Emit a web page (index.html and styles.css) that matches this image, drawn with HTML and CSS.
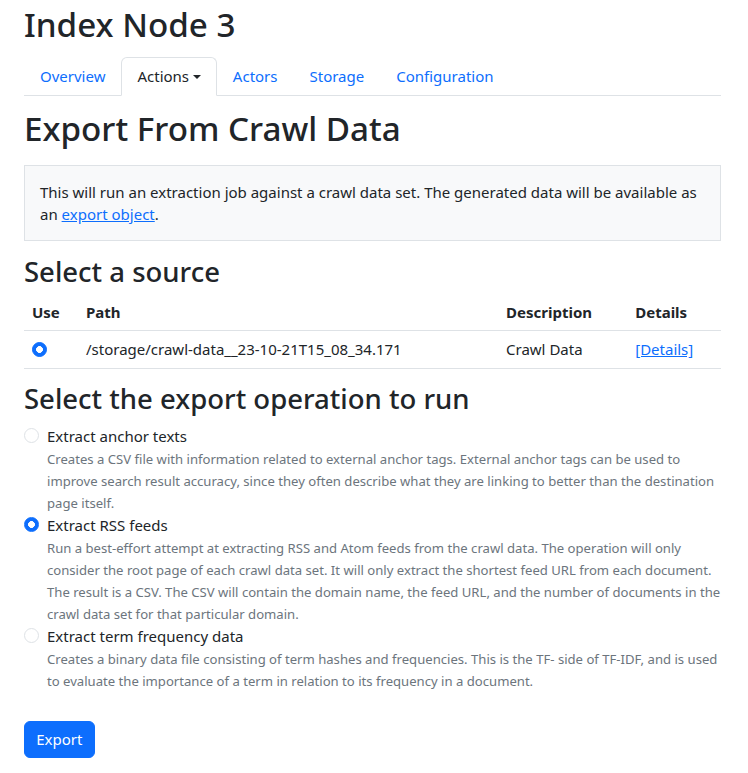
FILE: index.html
```html
<!DOCTYPE html>
<html lang="en">
<head>
<meta charset="utf-8">
<title>Index Node 3</title>
<link rel="stylesheet" href="styles.css">
</head>
<body>
<div class="page">
  <h1 class="node-title">Index Node 3</h1>
  <nav class="tabs">
    <a class="tab" href="#">Overview</a>
    <a class="tab active" href="#">Actions<span class="caret"></span></a>
    <a class="tab" href="#">Actors</a>
    <a class="tab" href="#">Storage</a>
    <a class="tab" href="#">Configuration</a>
  </nav>
  <h1 class="page-title">Export From Crawl Data</h1>
  <div class="note">This will run an extraction job against a crawl data set. The generated data will be available as an <a href="#">export object</a>.</div>
  <h2 class="section-title">Select a source</h2>
  <table class="sources">
    <thead>
      <tr><th class="col-use">Use</th><th>Path</th><th>Description</th><th>Details</th></tr>
    </thead>
    <tbody>
      <tr>
        <td class="col-use"><input class="radio radio-cell" type="radio" name="source" checked></td>
        <td>/storage/crawl-data__23-10-21T15_08_34.171</td>
        <td>Crawl Data</td>
        <td><a href="#">[Details]</a></td>
      </tr>
    </tbody>
  </table>
  <h2 class="section-title">Select the export operation to run</h2>
  <div class="options">
    <div class="option">
      <input class="radio" type="radio" name="op" id="op1">
      <div class="option-body">
        <label for="op1" class="option-label">Extract anchor texts</label>
        <div class="option-desc">Creates a CSV file with information related to external anchor tags. External anchor tags can be used to improve search result accuracy, since they often describe what they are linking to better than the destination page itself.</div>
      </div>
    </div>
    <div class="option">
      <input class="radio" type="radio" name="op" id="op2" checked>
      <div class="option-body">
        <label for="op2" class="option-label">Extract RSS feeds</label>
        <div class="option-desc">Run a best-effort attempt at extracting RSS and Atom feeds from the crawl data. The operation will only consider the root page of each crawl data set. It will only extract the shortest feed URL from each document. The result is a CSV. The CSV will contain the domain name, the feed URL, and the number of documents in the crawl data set for that particular domain.</div>
      </div>
    </div>
    <div class="option">
      <input class="radio" type="radio" name="op" id="op3">
      <div class="option-body">
        <label for="op3" class="option-label">Extract term frequency data</label>
        <div class="option-desc">Creates a binary data file consisting of term hashes and frequencies. This is the TF- side of TF-IDF, and is used to evaluate the importance of a term in relation to its frequency in a document.</div>
      </div>
    </div>
  </div>
  <button class="btn-export" type="button">Export</button>
</div>
</body>
</html>
```

FILE: styles.css
```css
html { font-size: 15px; }
body {
  margin: 0;
  font-family: "Noto Sans", "DejaVu Sans", sans-serif;
  font-size: 15px;
  line-height: 1.5;
  color: #212529;
  background: #fff;
}
a { color: #0d6efd; }
.page {
  padding: 5px 27px 16px 24px;
}
.node-title, .page-title {
  font-size: 33.2px;
  font-weight: 500;
  line-height: 1.2;
}
.node-title { margin: 0 0 12px; }
.page-title { margin: 13px 0 16px; }
.tabs {
  display: flex;
  border-bottom: 1px solid #dee2e6;
}
.tab {
  padding: 7.5px 15px;
  margin-bottom: -1px;
  border: 1px solid transparent;
  border-top-left-radius: 6px;
  border-top-right-radius: 6px;
  text-decoration: none;
  color: #0d6efd;
}
.tab.active {
  color: #212529;
  border-color: #dee2e6 #dee2e6 #fff;
  background: #fff;
}
.caret {
  display: inline-block;
  margin-left: 3.8px;
  vertical-align: 3.8px;
  border-top: 4.5px solid;
  border-left: 4.5px solid transparent;
  border-right: 4.5px solid transparent;
}
.note {
  background: #f8f9fa;
  border: 1px solid #dee2e6;
  padding: 15px;
  line-height: 22px;
  margin: 0 0 14px;
}
.section-title {
  margin: 0 0 5.5px;
  font-size: 27.5px;
  font-weight: 500;
  line-height: 1.2;
}
.sources {
  width: 100%;
  border-collapse: collapse;
  margin-bottom: 13px;
}
.sources th, .sources td {
  padding: 7px 8px;
  text-align: left;
  border-bottom: 1px solid #dee2e6;
  vertical-align: top;
}
.sources th { font-weight: 700; }
.col-use { width: 38px; }
.radio {
  appearance: none;
  -webkit-appearance: none;
  width: 15px;
  height: 15px;
  margin: 2.5px 0 0;
  border: 1px solid #dee2e6;
  border-radius: 50%;
  background: #fff;
  flex: none;
}
.radio-cell {
  display: block;
  margin: 3.5px 0 0;
}
.radio:checked {
  border-color: #0d6efd;
  background: radial-gradient(circle closest-side, #fff 0 48%, #0d6efd 56%);
}
.options { padding-top: 5px; }
.option {
  display: flex;
  gap: 8px;
}
.option + .option { margin-top: 0.5px; }
.option-body { flex: 1; }
.option-label { display: block; }
.option-desc {
  font-size: 13.125px;
  line-height: 22px;
  color: #6c757d;
}
.btn-export {
  margin-top: 29px;
  font-family: inherit;
  font-size: 15px;
  line-height: 1.5;
  padding: 6.5px 11.25px;
  color: #fff;
  background: #0d6efd;
  border: 1px solid #0d6efd;
  border-radius: 6px;
}
```
